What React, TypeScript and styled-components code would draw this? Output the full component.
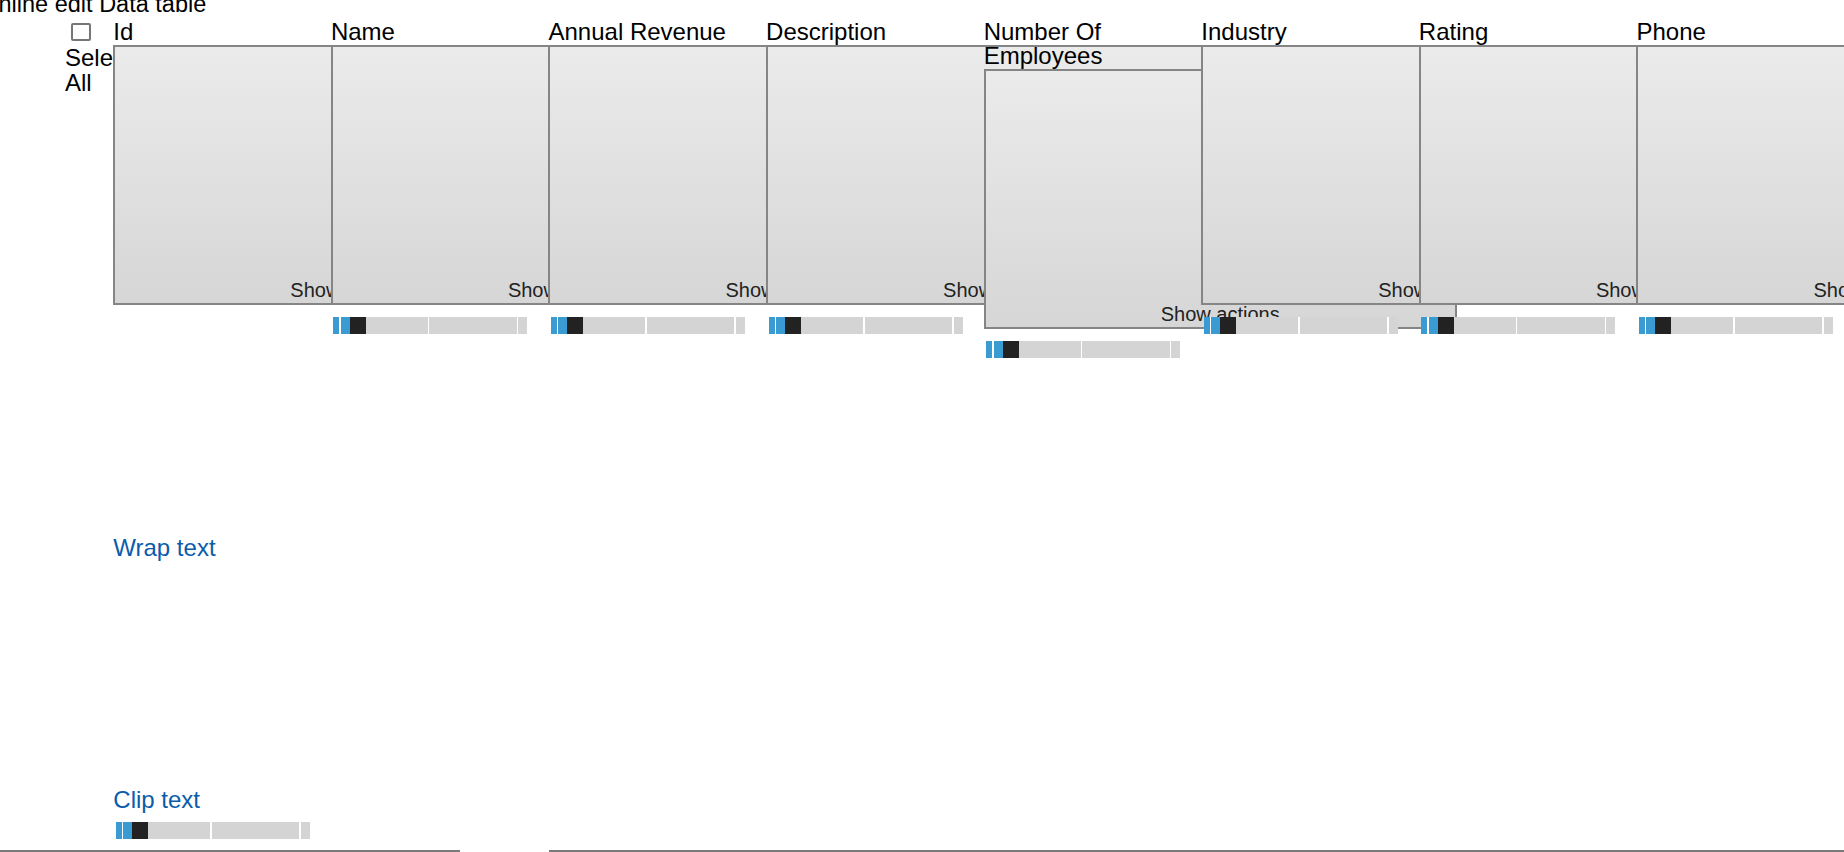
import React from "react";
import styled, { createGlobalStyle } from "styled-components";

const GlobalStyle = createGlobalStyle`
  html, body { margin: 0; padding: 0; overflow: hidden; background: #ffffff; }
  body {
    font-family: "Liberation Sans", Arial, Helvetica, sans-serif;
    font-size: 24px;
    color: #000000;
  }
`;

const Page = styled.div`
  width: 1844px;
  height: 852px;
  overflow: hidden;
`;

const Title = styled.div`
  margin: -8.4px 0 0 -8px;
  font-size: 23.5px;
  line-height: 25.3px;
  white-space: nowrap;
`;

const HeaderRow = styled.div`
  display: flex;
  align-items: flex-start;
  margin: 3.2px 0 0 65px;
  padding-bottom: 11px;
`;

const SelectCol = styled.div`
  position: relative;
  flex: 0 0 48.3px;
  width: 48.3px;
  display: flex;
  flex-direction: column;
`;

const CheckBox = styled.span`
  box-sizing: border-box;
  display: block;
  width: 19.5px;
  height: 18.5px;
  margin: 2.6px 0 3.4px 6px;
  border: 2px solid #767676;
  border-radius: 2px;
  background: #ffffff;
`;

const SelectLabel = styled.div`
  line-height: 25px;
`;

const Column = styled.div<{ $w: number }>`
  position: relative;
  flex: 0 0 ${(p) => p.$w}px;
  width: ${(p) => p.$w}px;
  display: flex;
  flex-direction: column;
`;

const Label = styled.div`
  padding-bottom: 1px;
  line-height: 24px;
`;

const ActionBox = styled.div`
  box-sizing: border-box;
  width: 473px;
  height: 260px;
  border: 2px solid #858585;
  background: linear-gradient(#ebebeb, #d6d6d6);
  display: flex;
  align-items: flex-end;
  justify-content: center;
  padding-bottom: 0.4px;
  font-size: 20px;
  line-height: 25px;
  color: #222222;
  white-space: nowrap;
`;

const Range = styled.div<{ $gap: number }>`
  display: flex;
  width: 194px;
  height: 16.5px;
  margin: ${(p) => p.$gap}px 0 0 2.5px;
`;

const Seg = styled.span<{ $c: string; $w: number }>`
  flex: 0 0 ${(p) => p.$w}px;
  background: ${(p) => p.$c};
`;

const MenuItem = styled.div<{ $h: number }>`
  height: ${(p) => p.$h}px;
  display: flex;
  align-items: flex-end;
  line-height: 24.6px;
  color: #0b5cab;
  white-space: nowrap;
`;

const DataRow = styled.div`
  display: flex;
  height: 20px;
`;

const DataCell = styled.div<{ $w: number; $ml?: number }>`
  flex: 0 0 ${(p) => p.$w}px;
  margin-left: ${(p) => p.$ml ?? 0}px;
  box-sizing: border-box;
  border-top: 2px solid #7a7a7a;
  border-left: 1.5px solid #7a7a7a;
`;

const BLUE = "#3a9bd2";
const BLACK = "#222222";
const GREY = "#d4d4d4";
const WHITE = "#ffffff";

const segments: Array<[string, number]> = [
  [BLUE, 6],
  [WHITE, 1.5],
  [BLUE, 9],
  [BLACK, 16],
  [GREY, 62],
  [WHITE, 1.5],
  [GREY, 87.5],
  [WHITE, 1.5],
  [GREY, 9],
];

const ResizeBar: React.FC<{ gap: number }> = ({ gap }) => (
  <Range $gap={gap}>
    {segments.map(([c, w], i) => (
      <Seg key={i} $c={c} $w={w} />
    ))}
  </Range>
);

const COL_W = 217.6;

const columns = [
  "Name",
  "Annual Revenue",
  "Description",
  "Number Of Employees",
  "Industry",
  "Rating",
  "Phone",
];

export default function App() {
  return (
    <Page>
      <GlobalStyle />
      <Title>Inline edit Data table</Title>
      <HeaderRow>
        <SelectCol>
          <CheckBox />
          <SelectLabel>Select All</SelectLabel>
        </SelectCol>
        <Column $w={COL_W}>
          <Label>Id</Label>
          <ActionBox>Show actions</ActionBox>
          <MenuItem $h={255.2}>Wrap text</MenuItem>
          <MenuItem $h={252.8}>Clip text</MenuItem>
          <ResizeBar gap={9} />
        </Column>
        {columns.map((c) => (
          <Column key={c} $w={COL_W}>
            <Label>{c}</Label>
            <ActionBox>Show actions</ActionBox>
            <ResizeBar gap={12} />
          </Column>
        ))}
      </HeaderRow>
      <DataRow>
        <DataCell $w={460} />
        <DataCell $w={COL_W} $ml={88.5} />
        <DataCell $w={COL_W} />
        <DataCell $w={COL_W} />
        <DataCell $w={COL_W} />
        <DataCell $w={COL_W} />
        <DataCell $w={COL_W} />
      </DataRow>
    </Page>
  );
}
